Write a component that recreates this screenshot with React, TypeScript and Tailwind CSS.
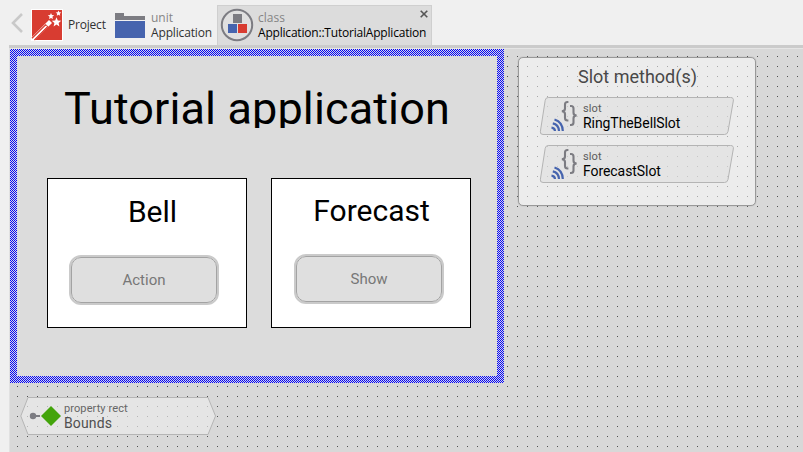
import React from 'react';

const tabFont = "font-['Open_Sans','Noto_Sans',sans-serif]";
const uiFont = "font-['Roboto',sans-serif]";

function WandIcon() {
  return (
    <svg width="32" height="32" viewBox="0 0 32 32" className="shrink-0">
      <rect width="32" height="32" fill="#fff" />
      <rect x="1" y="1" width="30" height="30" fill="#d83c31" />
      <path d="M1 28 L18 11 L21 14 L4 31 H1Z" fill="#fff" />
      <path d="M1 29.2 L14.6 15.8 L16.6 17.8 L3.4 31" fill="none" stroke="#d83c31" strokeWidth="1.3" />
      <path d="M2.5 30 L16 16.8" stroke="#fff" strokeWidth="0.8" />
      <path d="M25.5 8.3l1.3 3.2 3.4.3-2.6 2.2.8 3.4-2.9-1.8-2.9 1.8.8-3.4-2.6-2.2 3.4-.3z" fill="#fff" />
      <path d="M20 4l.9 2.1 2.3.2-1.8 1.5.6 2.3-2-1.2-2 1.2.6-2.3-1.8-1.5 2.3-.2z" fill="#fff" />
      <path d="M27.5 1.5l.8 1.8 2 .2-1.5 1.3.4 2-1.7-1-1.7 1 .4-2-1.5-1.3 2-.2z" fill="#fff" />
    </svg>
  );
}

function FolderIcon() {
  return (
    <svg width="30" height="25" viewBox="0 0 30 25" className="shrink-0">
      <path d="M0 0h9v3h21v4H0z" fill="#7c7c82" />
      <rect y="8" width="30" height="17" fill="#4664ae" />
    </svg>
  );
}

function ClassIcon() {
  return (
    <svg width="34" height="34" viewBox="0 0 34 34" className="shrink-0">
      <circle cx="17" cy="17" r="15.2" fill="#e0e0e0" stroke="#7c7c82" strokeWidth="2" />
      <rect x="13" y="6" width="9" height="9" fill="#7c7c82" />
      <rect x="8" y="16" width="9" height="9" fill="#4664ae" />
      <rect x="18" y="16" width="9" height="9" fill="#d83c31" />
    </svg>
  );
}

function SlotItem({ name }: { name: string }) {
  return (
    <div className="grid h-[40px] w-[196px]">
      <svg width="196" height="40" viewBox="0 0 196 40" className="col-start-1 row-start-1">
        <path
          d="M9.2 1.5 H191.5 Q195 1.5 194.3 5 L189 35.5 Q188.4 38.5 185.5 38.5 H4 Q.8 38.5 1.4 35.3 L6.2 4.3 Q6.7 1.5 9.2 1.5Z"
          fill="#dfdfdf" fillOpacity=".55" stroke="#b4b4b4"
        />
        <g fill="none" stroke="#7c7c82" strokeWidth="2.1">
          <path d="M29.4 6 H28.5 Q26 6 26 8.5 V12.5 Q26 15.2 22.8 15.2 Q26 15.2 26 18 V22 Q26 24.5 28.5 24.5 H29.4" />
          <path d="M31 10 H32 Q34.5 10 34.5 12.5 V16.8 Q34.5 19.5 37.7 19.5 Q34.5 19.5 34.5 22.2 V26.5 Q34.5 29 32 29 H31" />
        </g>
        <g fill="none" stroke="#4664ae" strokeWidth="2.2">
          <path d="M12.5 31.7 Q15.7 32 16 35" />
          <path d="M13.8 27.4 Q19.6 28.6 20 35" />
          <path d="M15.5 23.5 Q23.6 26 23.8 35" />
        </g>
      </svg>
      <div className="col-start-1 row-start-1 flex flex-col pl-[44px] pt-[6px]">
        <span className="h-[13px] text-[11px] leading-[13px] tracking-[0.1px] text-[#5c5c5c]">slot</span>
        <span className="h-[16px] text-[14px] leading-[16px] tracking-[-0.07px] text-black">{name}</span>
      </div>
    </div>
  );
}

function Card({ title, action, titleClass, buttonClass }: { title: string; action: string; titleClass: string; buttonClass: string }) {
  return (
    <div className="h-[150px] w-[200px] border border-black bg-white">
      <div className={`flex h-[40px] items-center justify-center whitespace-nowrap text-[30px] text-black ${titleClass}`}>{title}</div>
      <button className={`flex h-[50px] w-[150px] rounded-[12px] border-2 border-[#cacaca] ${buttonClass}`}>
        <span className="flex h-full w-full items-center justify-center rounded-[10px] border border-[#a3a3a3] bg-[#dfdfdf] text-[15px] text-[#777]">{action}</span>
      </button>
    </div>
  );
}

function Canvas() {
  return (
    <div className="flex grow bg-[conic-gradient(from_270deg_at_1px_1px,#505050_25%,transparent_0)] bg-[length:10px_10px] bg-[position:7px_7px]">
      <div className="w-[494px] shrink-0">
        <div className="h-[334px] bg-[#dcdcdc] bg-[conic-gradient(#0000ff_25%,#dcdcdc_0_50%,#0000ff_0_75%,#dcdcdc_0)] bg-[length:2px_2px] p-[7px]">
          <section className="h-[320px] bg-[#dcdcdc]">
            <h1 className="h-[72px] overflow-hidden whitespace-nowrap pt-[26px] text-center text-[45px] leading-[53px] tracking-[0.12px] text-black">Tutorial application</h1>
            <div className="ml-[30px] mt-[50px] flex gap-[24px]">
              <Card title="Bell" action="Action" titleClass="mt-[12px] pl-[11px]" buttonClass="ml-[21px] mt-[24px]" />
              <Card title="Forecast" action="Show" titleClass="mt-[11px] pl-px" buttonClass="ml-[22px] mt-[24px]" />
            </div>
          </section>
        </div>
        <div className="ml-[10px] mt-[13px] grid h-[40px] w-[197px]">
          <svg width="197" height="40" viewBox="0 0 197 40" className="col-start-1 row-start-1">
            <path d="M8 1.5 H188 L195.5 20 L188 38.5 H8 L.8 20Z" fill="#ededed" fillOpacity=".65" stroke="#b5b5b5" />
            <path d="M13 20 H20" stroke="#7c7c82" strokeWidth="2" />
            <circle cx="13" cy="20" r="3.2" fill="#7c7c82" />
            <path d="M31 10 L41 20 L31 30 L21 20Z" fill="#43a40b" />
          </svg>
          <div className="col-start-1 row-start-1 flex flex-col pl-[44px] pt-[6px]">
            <span className="h-[13px] text-[11px] leading-[13px] tracking-[0.1px] text-[#666]">property rect</span>
            <span className="h-[16px] text-[14px] leading-[16px] tracking-[0.15px] text-[#505050]">Bounds</span>
          </div>
        </div>
      </div>
      <aside className="ml-[14px] mt-[8px] flex h-[149px] w-[238px] flex-col items-center rounded-[5px] border border-[#999] bg-white/50 shadow-[0_0_1px_#888]">
        <h2 className="mt-[7px] h-[24px] pl-px text-[18px] leading-[24px] text-[#484848]">Slot method(s)</h2>
        <div className="mt-[7px] flex flex-col gap-[8px]">
          <SlotItem name="RingTheBellSlot" />
          <SlotItem name="ForecastSlot" />
        </div>
      </aside>
    </div>
  );
}

export default function App() {
  return (
    <div className={`flex h-[452px] w-[803px] flex-col overflow-hidden bg-[#f0f0f0] ${uiFont}`}>
      <header className={`flex h-[45px] shrink-0 text-[12px] leading-[15px] ${tabFont}`}>
        <div className="flex w-[217px] shrink-0">
          <svg width="14" height="22" viewBox="0 0 14 22" className="ml-[10px] mt-[12px] shrink-0">
            <path d="M12 2 L3 11 L12 20" fill="none" stroke="#c9c9c9" strokeWidth="2.6" />
          </svg>
          <div className="ml-[7px] mt-[9px]"><WandIcon /></div>
          <span className="ml-[5px] mt-[17px] w-[38px] tracking-[-0.2px] text-[#303030]">Project</span>
          <div className="ml-[9px] mt-[13px]"><FolderIcon /></div>
          <div className="ml-[6px] mt-[10px] flex flex-col whitespace-nowrap">
            <span className="text-[#858585]">unit</span>
            <span className="tracking-[-0.15px] text-[#303030]">Application</span>
          </div>
        </div>
        <div className="mt-[5px] flex w-[215px] shrink-0 border border-b-0 border-[#cfcfcf] bg-[#dcdcdc]">
          <div className="ml-[2px] mt-[2px]"><ClassIcon /></div>
          <div className="ml-[4px] mt-[4px] flex w-[158px] flex-col whitespace-nowrap">
            <span className="text-[#858585]">class</span>
            <span className="tracking-[-0.2px] text-black">Application::TutorialApplication</span>
          </div>
          <svg width="8" height="8" viewBox="0 0 8 8" className="ml-[4px] mt-[4px] shrink-0">
            <path d="M.7.7 L7.3 7.3 M7.3.7 L.7 7.3" stroke="#555" strokeWidth="1.6" />
          </svg>
        </div>
      </header>
      <main className="ml-[9px] flex h-[407px] flex-col border-l border-[#e1e1e1] bg-[#d8d8d8]">
        <div className="-ml-px h-[3px] shrink-0 bg-[#cbcbcb]" />
        <div className="h-px shrink-0 bg-[#e5e5e5]" />
        <Canvas />
      </main>
    </div>
  );
}
